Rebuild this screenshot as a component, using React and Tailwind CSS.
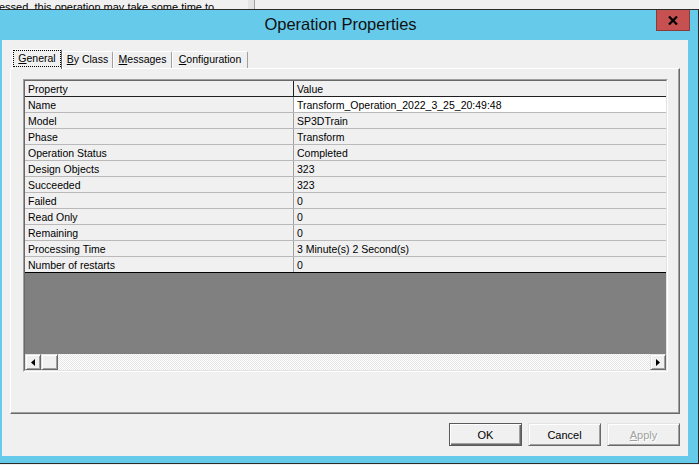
import React from "react";

const rows = [
  ["Name", "Transform_Operation_2022_3_25_20:49:48", true],
  ["Model", "SP3DTrain"],
  ["Phase", "Transform"],
  ["Operation Status", "Completed"],
  ["Design Objects", "323"],
  ["Succeeded", "323"],
  ["Failed", "0"],
  ["Read Only", "0"],
  ["Remaining", "0"],
  ["Processing Time", "3 Minute(s) 2 Second(s)"],
  ["Number of restarts", "0"],
];

function Tab({ w, selected, children }) {
  if (selected) {
    return (
      <div
        className="relative z-10 -mb-px h-[20px] flex bg-[#f0f0f0] border-t border-l border-white border-r border-r-[#696969] rounded-tl-[2px] rounded-tr-[2px]"
        style={{ width: w }}
      >
        <div className="flex-1 mb-[2px] flex items-center justify-center border border-dotted border-black">
          {children}
        </div>
      </div>
    );
  }
  return (
    <div
      className="h-[17px] flex items-center justify-center bg-[#f0f0f0] border-t border-l border-white border-r border-r-[#a0a0a0] rounded-tl-[2px] rounded-tr-[2px] pb-px"
      style={{ width: w }}
    >
      {children}
    </div>
  );
}

function ScrollBtn({ dir }) {
  return (
    <div className="w-[16px] h-[16px] flex items-center justify-center bg-[#f0f0f0] border border-t-[#e3e3e3] border-l-[#e3e3e3] border-r-[#696969] border-b-[#696969] shadow-[inset_1px_1px_0_#ffffff,inset_-1px_-1px_0_#a0a0a0]">
      <svg width="4" height="7" viewBox="0 0 4 7">
        {dir === "left" ? (
          <polygon points="4,0 4,7 0,3.5" fill="#000" />
        ) : (
          <polygon points="0,0 0,7 4,3.5" fill="#000" />
        )}
      </svg>
    </div>
  );
}

export default function App() {
  return (
    <div className="w-[699px] h-[465px] overflow-hidden bg-[#f0f0f0] text-black font-['Liberation_Sans',Arial,sans-serif]">
      {/* background window strip */}
      <div className="h-[9px] flex overflow-hidden">
        <div className="w-[248px] overflow-hidden">
          <div className="-ml-[1px] pt-[2px] text-[11px] leading-[11px] whitespace-nowrap">
            essed, this operation may take some time to
          </div>
        </div>
        <div className="w-[7px] bg-[#e3e3e3] border-r border-[#a0a0a0]" />
      </div>

      {/* dialog window */}
      <div className="relative w-[699px] bg-[#66cbea] border-t border-r border-b border-[#2b2b2b] pl-[2px] pr-[10px] pb-[7px]">
        <div className="h-[30px] flex items-center justify-center pr-[9px] pb-[2px] text-[16.5px] text-[#111]">
          Operation Properties
        </div>
        <div className="absolute top-0 right-[8px] w-[34px] h-[21px] bg-[#c75050] border border-t-0 border-[#8a3a3a] flex items-center justify-center">
          <svg width="10" height="9" viewBox="0 0 10 9">
            <path d="M1 0.5 L9 8.5 M9 0.5 L1 8.5" stroke="#000" strokeWidth="2.2" />
          </svg>
        </div>

        {/* client area */}
        <div className="h-[416px] bg-[#f0f0f0] flex flex-col text-[10.5px]">
          <div className="mt-[9px] ml-[10px] h-[19px] flex items-end">
            <Tab w={50} selected>
              <span>
                <span className="underline">G</span>eneral
              </span>
            </Tab>
            <Tab w={51}>
              <span>
                <span className="underline">B</span>y Class
              </span>
            </Tab>
            <Tab w={59}>
              <span>
                <span className="underline">M</span>essages
              </span>
            </Tab>
            <Tab w={76}>
              <span>
                <span className="underline">C</span>onfiguration
              </span>
            </Tab>
          </div>

          {/* tab panel */}
          <div className="ml-[8px] w-[670px] h-[346px] border-t border-l border-white border-r border-b border-r-[#696969] border-b-[#696969] shadow-[inset_-1px_-1px_0_#a0a0a0] pt-[10px] pl-[12px]">
            {/* grid */}
            <div className="w-[645px] h-[293px] border border-t-[#a0a0a0] border-l-[#a0a0a0] border-r-white border-b-white">
              <div className="h-full border border-t-[#696969] border-l-[#696969] border-r-[#e3e3e3] border-b-[#e3e3e3] flex flex-col">
                {/* header */}
                <div className="h-[16px] flex border-b border-[#202020] bg-[#f0f0f0]">
                  <div className="w-[269px] border-r border-[#202020] pl-[3px] pt-px leading-[14px]">
                    Property
                  </div>
                  <div className="flex-1 pl-[3px] pt-px leading-[14px]">Value</div>
                </div>
                {rows.map(([k, v, sel], i) => (
                  <div
                    key={k}
                    className={`h-[16px] flex border-b ${
                      i === rows.length - 1 ? "border-black" : "border-[#b9b9b9]"
                    } bg-[#f0f0f0]`}
                  >
                    <div className="w-[269px] border-r border-[#a0a0a0] pl-[3px] pt-px leading-[14px] whitespace-nowrap">
                      {k}
                    </div>
                    <div
                      className={`flex-1 pl-[3px] pt-px leading-[14px] whitespace-nowrap ${
                        sel ? "bg-white" : ""
                      }`}
                    >
                      {v}
                    </div>
                  </div>
                ))}
                <div className="flex-1 bg-[#808080]" />
                {/* horizontal scrollbar */}
                <div className="h-[16px] flex">
                  <ScrollBtn dir="left" />
                  <div className="w-[17px] h-[16px] bg-[#f0f0f0] border border-t-[#e3e3e3] border-l-[#e3e3e3] border-r-[#696969] border-b-[#696969] shadow-[inset_1px_1px_0_#ffffff,inset_-1px_-1px_0_#a0a0a0]" />
                  <div className="flex-1 bg-[image:repeating-conic-gradient(#ffffff_0%_25%,#e6e6e6_0%_50%)] bg-[length:2px_2px]" />
                  <ScrollBtn dir="right" />
                </div>
              </div>
            </div>
          </div>

          {/* buttons */}
          <div className="mt-[9px] flex justify-end gap-[6px] pr-[8px] text-[11px]">
            <button className="w-[73px] h-[23px] bg-[#f0f0f0] border border-[#5a5a5a] shadow-[inset_1px_1px_0_#ffffff,inset_-1px_-1px_0_#696969,inset_-2px_-2px_0_#a0a0a0] flex items-center justify-center pt-px">
              OK
            </button>
            <button className="w-[73px] h-[23px] bg-[#f0f0f0] border border-t-[#e3e3e3] border-l-[#e3e3e3] border-r-[#696969] border-b-[#696969] shadow-[inset_1px_1px_0_#ffffff,inset_-1px_-1px_0_#a0a0a0] flex items-center justify-center pt-px">
              Cancel
            </button>
            <button className="w-[73px] h-[23px] bg-[#f0f0f0] border border-t-[#e3e3e3] border-l-[#e3e3e3] border-r-[#696969] border-b-[#696969] shadow-[inset_1px_1px_0_#ffffff,inset_-1px_-1px_0_#a0a0a0] flex items-center justify-center pt-px text-[#a0a0a0] [text-shadow:1px_1px_0_#ffffff]">
              <span>
                <span className="underline">A</span>pply
              </span>
            </button>
          </div>
        </div>
      </div>
    </div>
  );
}
